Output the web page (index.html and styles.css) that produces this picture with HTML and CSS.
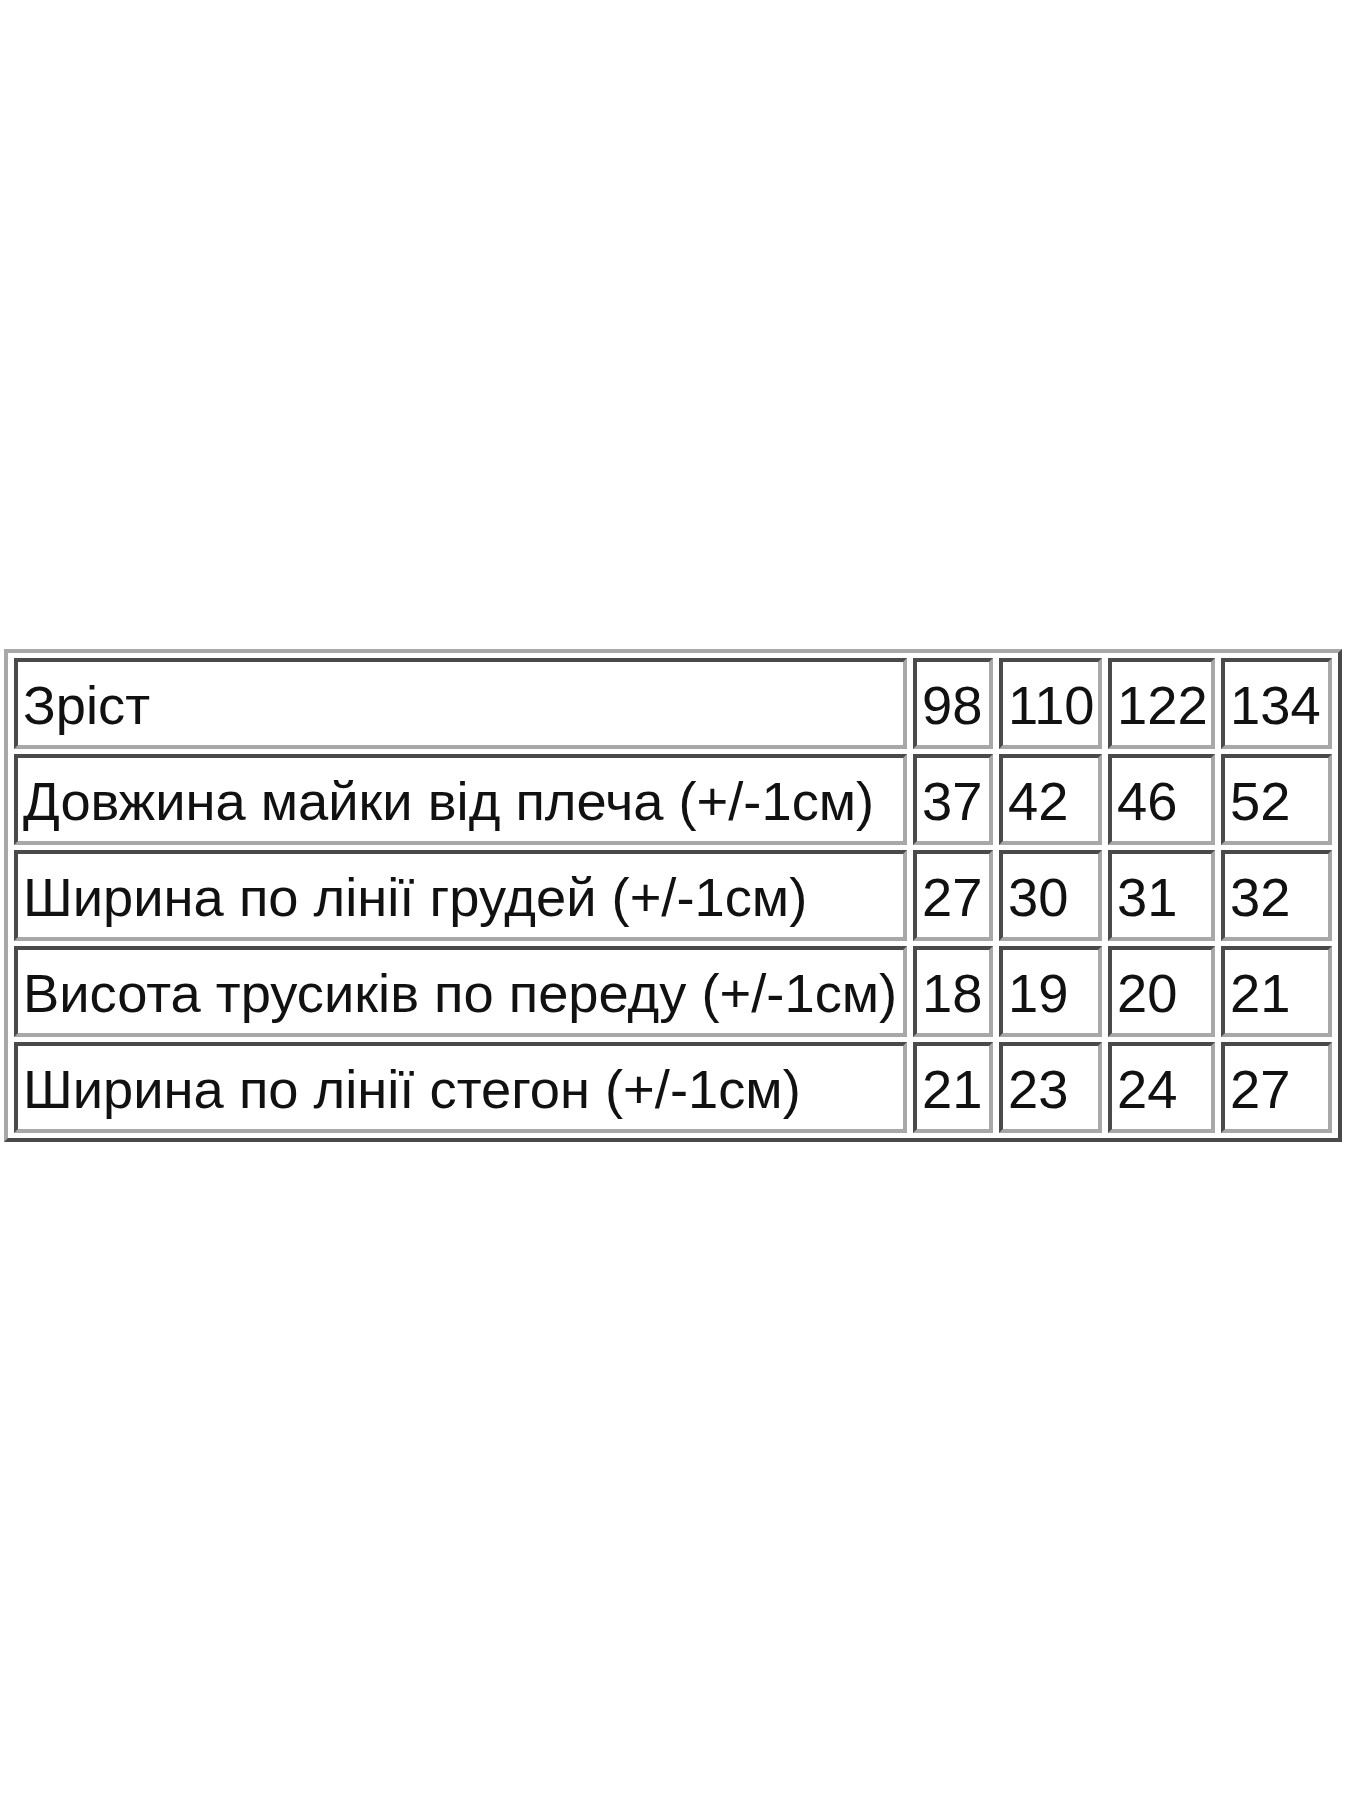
FILE: index.html
```html
<!DOCTYPE html>
<html lang="uk">
<head>
<meta charset="utf-8">
<title>Розмірна сітка</title>
<link rel="stylesheet" href="styles.css">
</head>
<body>
<div class="page">
  <table class="sizes">
    <colgroup>
      <col class="c-label">
      <col class="c-98">
      <col class="c-110">
      <col class="c-122">
      <col class="c-134">
    </colgroup>
    <tr><td>Зріст</td><td>98</td><td>110</td><td>122</td><td>134</td></tr>
    <tr><td>Довжина майки від плеча (+/-1см)</td><td>37</td><td>42</td><td>46</td><td>52</td></tr>
    <tr><td>Ширина по лінії грудей (+/-1см)</td><td>27</td><td>30</td><td>31</td><td>32</td></tr>
    <tr><td>Висота трусиків по переду (+/-1см)</td><td>18</td><td>19</td><td>20</td><td>21</td></tr>
    <tr><td>Ширина по лінії стегон (+/-1см)</td><td>21</td><td>23</td><td>24</td><td>27</td></tr>
  </table>
</div>
</body>
</html>
```
FILE: styles.css
```css
html, body {
  margin: 0;
  padding: 0;
  background: #ffffff;
}

.page {
  width: 1350px;
  height: 1800px;
  box-sizing: border-box;
  padding: 649px 0 0 4px;
}

.sizes {
  table-layout: fixed;
  width: 1338px;
  box-sizing: border-box;
  border-collapse: separate;
  border-spacing: 6px 5px;
  border-style: solid;
  border-width: 4px;
  border-color: #a8a8a8 #4a4a4a #4a4a4a #a8a8a8;
  font-family: "Liberation Sans", Arial, sans-serif;
  font-size: 54.3px;
  color: #111111;
}

.sizes td {
  box-sizing: border-box;
  height: 91px;
  padding: 6px 0 0 5px;
  border-style: solid;
  border-width: 4px;
  border-color: #4a4a4a #a8a8a8 #a8a8a8 #4a4a4a;
  vertical-align: middle;
  white-space: nowrap;
  line-height: 1;
}

.c-label { width: 893px; }
.c-98 { width: 80px; }
.c-110 { width: 103px; }
.c-122 { width: 107px; }
.c-134 { width: 111px; }
```
